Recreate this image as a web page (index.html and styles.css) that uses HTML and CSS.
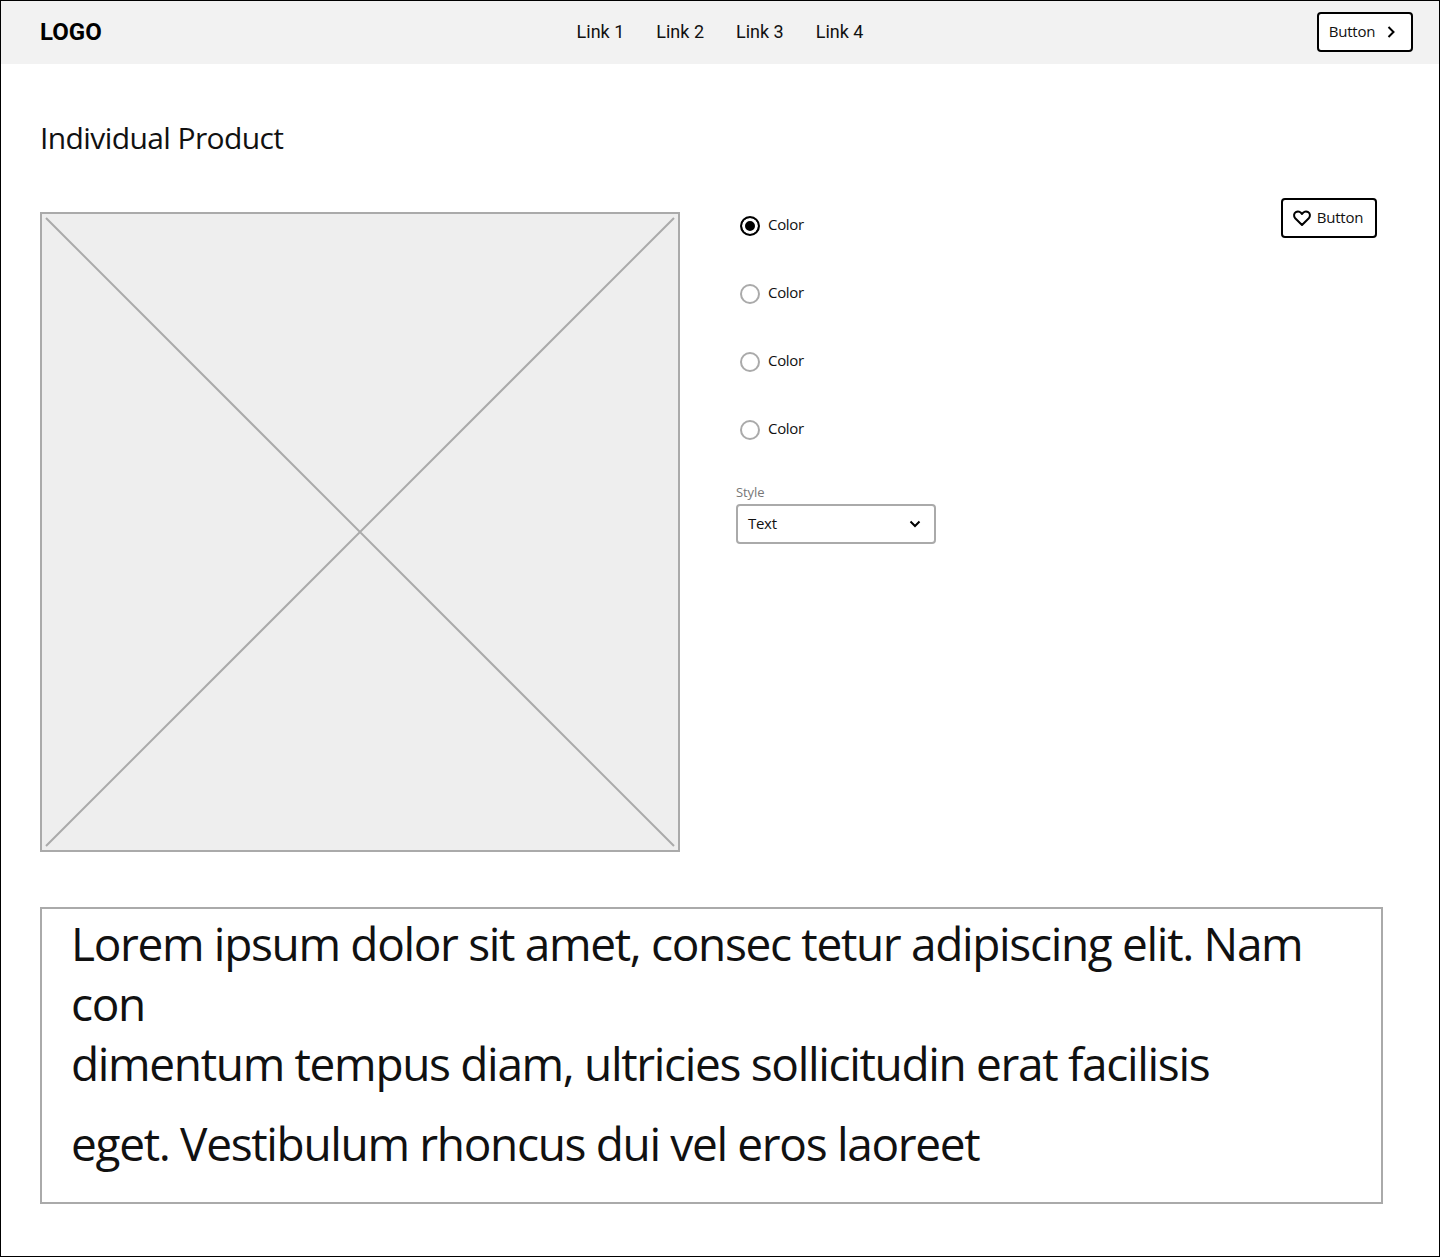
FILE: index.html

```html
<!DOCTYPE html>
<html lang="en">
<head>
    <meta charset="UTF-8">
    <title>Individual Product</title>
    <link rel="stylesheet" href="styles.css">
</head>
<body>

<div class="frame">
    <header class="topbar">
        <div class="logo">LOGO</div>
        <nav class="nav-links">
            <a href="#">Link 1</a>
            <a href="#">Link 2</a>
            <a href="#">Link 3</a>
            <a href="#">Link 4</a>
        </nav>
        <button class="btn btn-next">
            <span class="btn-text">Button</span>
            <svg width="20" height="20" viewBox="0 0 20 20"><path d="M7.500 5 12.500 10 7.500 15" fill="none" stroke="#000" stroke-width="2"/></svg>
        </button>
    </header>

    <main class="content">
        <h1>Individual Product</h1>

        <div class="product">
            <div class="placeholder">
                <svg width="636" height="636" viewBox="0 0 636 636">
                    <path d="M4 4 632 632M632 4 4 632" stroke="#aaa" stroke-width="2" fill="none"/>
                </svg>
            </div>

            <div class="options">
                <div class="colors">
                    <label class="radio-row"><span class="radio radio-on"></span><span class="radio-text">Color</span></label>
                    <label class="radio-row"><span class="radio"></span><span class="radio-text">Color</span></label>
                    <label class="radio-row"><span class="radio"></span><span class="radio-text">Color</span></label>
                    <label class="radio-row"><span class="radio"></span><span class="radio-text">Color</span></label>
                </div>
                <div class="field">
                    <label class="field-label">Style</label>
                    <div class="select">
                        <span class="select-text">Text</span>
                        <svg width="16" height="16" viewBox="0 0 16 16"><path d="M3.500 5.500 8 10 12.500 5.500" fill="none" stroke="#000" stroke-width="2"/></svg>
                    </div>
                </div>
            </div>

            <button class="btn btn-fav">
                <svg width="20" height="20" viewBox="0 0 20 20"><path d="M10 17 3.200 10.200C1.400 8.300 1.800 5.400 3.800 4.200 5.800 3 8.500 3.600 10 6 11.500 3.600 14.200 3 16.200 4.200 18.200 5.400 18.600 8.300 16.800 10.200Z" fill="none" stroke="#000" stroke-width="2" stroke-linejoin="round"/></svg>
                <span class="btn-text">Button</span>
            </button>
        </div>

        <div class="description">
            <p class="line">Lorem ipsum dolor sit amet, consec tetur adipiscing elit. Nam con</p>
            <p class="line">dimentum tempus diam, ultricies sollicitudin erat facilisis</p>
            <p class="line line-last">eget. Vestibulum rhoncus dui vel eros laoreet</p>
        </div>
    </main>
</div>

</body>
</html>
```

FILE: styles.css

```css
* {
    box-sizing: border-box;
}
body {
    margin: 0;
    background-color: white;
    color: #111;
    font-family: "Open Sans", sans-serif;
}
.frame {
    width: 1440px;
    height: 1257px;
    border: 1px solid black;
}
.topbar {
    height: 63px;
    background-color: #f2f2f2;
    display: grid;
    grid-template-columns: 1fr auto 1fr;
    align-items: center;
    padding: 0 26px 1px;
}
.logo {
    padding-left: 13px;
    font-family: Roboto, sans-serif;
    font-weight: 700;
    font-size: 24px;
    color: black;
}
.nav-links {
    display: flex;
    gap: 32px;
    margin-bottom: 2px;
}
.nav-links a {
    font-family: Roboto, sans-serif;
    font-size: 18px;
    color: #111;
    text-decoration: none;
}
.btn {
    height: 40px;
    width: 96px;
    display: flex;
    align-items: center;
    background-color: white;
    border: 2px solid black;
    border-radius: 4px;
    font-family: "Open Sans", sans-serif;
    font-size: 15px;
    letter-spacing: -0.25px;
    color: #111;
    padding: 0;
}
.btn-text {
    margin-bottom: 2px;
}
.btn-next {
    justify-self: end;
    justify-content: center;
    gap: 6px;
}
.btn-fav {
    justify-content: center;
    gap: 5px;
    margin-left: auto;
    padding-right: 3px;
}
.content {
    padding: 0 39px;
}
h1 {
    margin: 0;
    padding-top: 53px;
    height: 134px;
    font-size: 30px;
    font-weight: 400;
    line-height: 42px;
    letter-spacing: -0.6px;
    color: #111;
}
.product {
    display: flex;
    height: 709px;
    padding-right: 23px;
}
.placeholder {
    width: 640px;
    height: 640px;
    margin-top: 14px;
    background-color: #eee;
    border: 2px solid #aaa;
}
.placeholder svg {
    display: block;
}
.options {
    margin-left: 56px;
    padding-top: 14px;
}
.colors {
    display: flex;
    flex-direction: column;
    gap: 40px;
}
.radio-row {
    height: 28px;
    display: flex;
    align-items: center;
    gap: 8px;
    font-size: 15px;
    letter-spacing: -0.3px;
    padding-left: 4px;
}
.radio-text {
    margin-bottom: 4px;
}
.radio {
    width: 20px;
    height: 20px;
    border: 2px solid #aaa;
    border-radius: 50%;
}
.radio-on {
    border: 2px solid black;
    background-color: black;
    box-shadow: inset 0 0 0 3px white;
}
.field {
    margin-top: 40px;
}
.field-label {
    display: block;
    height: 20px;
    font-size: 13px;
    line-height: 16px;
    letter-spacing: -0.1px;
    color: #777;
}
.select {
    width: 200px;
    height: 40px;
    display: flex;
    align-items: center;
    justify-content: space-between;
    padding: 0 11px 0 10px;
    border: 2px solid #aaa;
    border-radius: 4px;
    font-size: 15px;
    letter-spacing: -0.3px;
}
.select-text {
    margin-bottom: 2px;
}
.description {
    width: 1343px;
    height: 297px;
    border: 2px solid #aaa;
    padding: 4px 29px 0;
    font-size: 46px;
    letter-spacing: -1.33px;
    line-height: 60px;
}
.line {
    margin: 0;
}
.line-last {
    margin-top: 20px;
}
```
